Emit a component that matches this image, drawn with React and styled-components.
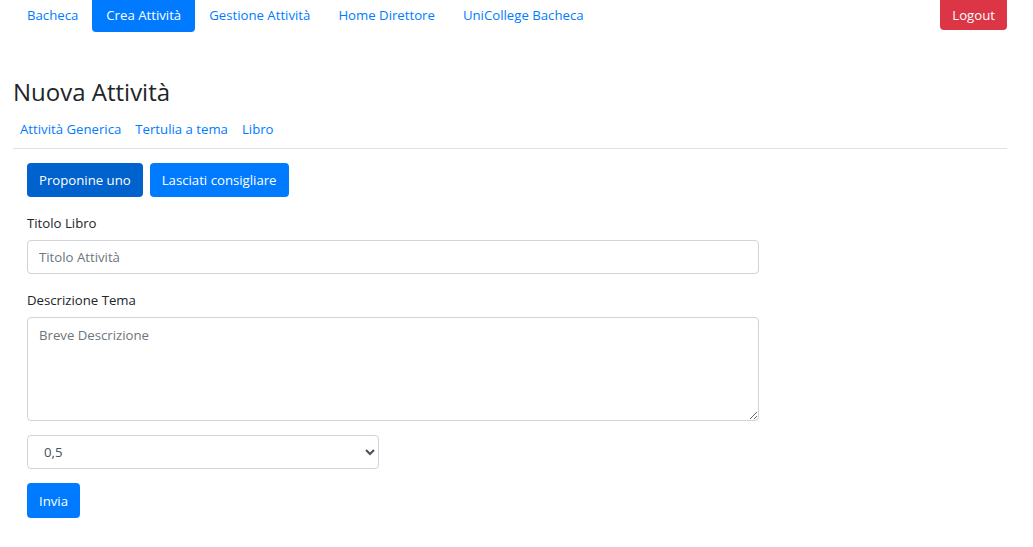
import React from "react";
import styled, { createGlobalStyle } from "styled-components";

const GlobalStyle = createGlobalStyle`
  html, body {
    margin: 0;
    padding: 0;
    background: #fff;
  }
  body {
    font-family: "Open Sans", "Noto Sans", sans-serif;
    font-size: 13.2px;
    color: #212529;
  }
  * {
    box-sizing: border-box;
  }
`;

const TopBar = styled.nav`
  display: flex;
  justify-content: space-between;
  align-items: flex-start;
  padding: 0 26px 0 13px;
`;

const Pills = styled.ul`
  display: flex;
  margin: 0;
  padding: 0;
  list-style: none;
`;

const Pill = styled.li`
  padding: 5px 14px 6px;
  line-height: 21px;
  border-radius: 0 0 4px 4px;
  color: ${p => (p.active ? "#fff" : "#007bff")};
  background: ${p => (p.active ? "#007bff" : "transparent")};
  cursor: pointer;
`;

const LogoutButton = styled.button`
  height: 30px;
  padding: 0 12px;
  border: none;
  border-radius: 0 0 4px 4px;
  background: #dc3545;
  color: #fff;
  font: inherit;
  line-height: 30px;
`;

const Main = styled.main`
  padding: 0 26px 0 13px;
`;

const Title = styled.h4`
  margin: 45px 0 5px;
  font-size: 24px;
  line-height: 29px;
  font-weight: 400;
  color: #212529;
`;

const Tabs = styled.div`
  display: flex;
  border-bottom: 1px solid #dee2e6;
`;

const Tab = styled.a`
  padding: 8px 7px;
  line-height: 21px;
  color: #007bff;
  text-decoration: none;
  cursor: pointer;
`;

const FormArea = styled.form`
  padding: 14px 14px 0;
`;

const ButtonRow = styled.div`
  display: flex;
  gap: 7px;
  margin-bottom: 16px;
`;

const Button = styled.button`
  height: ${p => (p.tall ? "35px" : "34px")};
  padding: 0 12px;
  border: none;
  border-radius: 4px;
  background: ${p => (p.pressed ? "#0062cc" : "#007bff")};
  color: #fff;
  font: inherit;
  line-height: 22px;
  cursor: pointer;
`;

const FormGroup = styled.div`
  margin-bottom: ${p => (p.tight ? "14px" : "16px")};
`;

const Label = styled.label`
  display: block;
  margin-bottom: 6px;
  line-height: 21px;
  color: #212529;
`;

const fieldStyle = `
  display: block;
  border: 1px solid #ced4da;
  border-radius: 4px;
  background: #fff;
  color: #495057;
  font: inherit;
  &::placeholder {
    color: #6c757d;
  }
`;

const TextInput = styled.input`
  ${fieldStyle}
  width: 732px;
  height: 34px;
  padding: 5px 11px;
  line-height: 22px;
`;

const TextArea = styled.textarea`
  ${fieldStyle}
  width: 732px;
  height: 104px;
  padding: 6px 11px;
  line-height: 22px;
  resize: vertical;
`;

const Select = styled.select`
  ${fieldStyle}
  width: 352px;
  height: 34px;
  padding: 0 8px 0 12px;
`;

export default function App() {
  return (
    <>
      <GlobalStyle />
      <TopBar>
        <Pills>
          <Pill>Bacheca</Pill>
          <Pill active>Crea Attività</Pill>
          <Pill>Gestione Attività</Pill>
          <Pill>Home Direttore</Pill>
          <Pill>UniCollege Bacheca</Pill>
        </Pills>
        <LogoutButton>Logout</LogoutButton>
      </TopBar>
      <Main>
        <Title>Nuova Attività</Title>
        <Tabs>
          <Tab>Attività Generica</Tab>
          <Tab>Tertulia a tema</Tab>
          <Tab>Libro</Tab>
        </Tabs>
        <FormArea onSubmit={e => e.preventDefault()}>
          <ButtonRow>
            <Button type="button" pressed>
              Proponine uno
            </Button>
            <Button type="button">Lasciati consigliare</Button>
          </ButtonRow>
          <FormGroup>
            <Label>Titolo Libro</Label>
            <TextInput placeholder="Titolo Attività" />
          </FormGroup>
          <FormGroup tight>
            <Label>Descrizione Tema</Label>
            <TextArea placeholder="Breve Descrizione" />
          </FormGroup>
          <FormGroup tight>
            <Select defaultValue="0,5">
              <option>0,5</option>
              <option>1</option>
              <option>1,5</option>
              <option>2</option>
            </Select>
          </FormGroup>
          <Button type="submit" tall>
            Invia
          </Button>
        </FormArea>
      </Main>
    </>
  );
}
